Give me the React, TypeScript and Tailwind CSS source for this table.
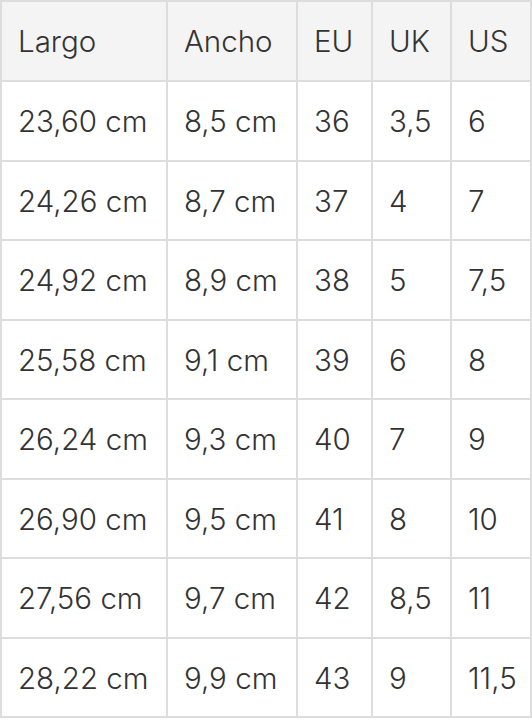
import React from "react";

const headers = ["Largo", "Ancho", "EU", "UK", "US"];

const rows: string[][] = [
  ["23,60 cm", "8,5 cm", "36", "3,5", "6"],
  ["24,26 cm", "8,7 cm", "37", "4", "7"],
  ["24,92 cm", "8,9 cm", "38", "5", "7,5"],
  ["25,58 cm", "9,1 cm", "39", "6", "8"],
  ["26,24 cm", "9,3 cm", "40", "7", "9"],
  ["26,90 cm", "9,5 cm", "41", "8", "10"],
  ["27,56 cm", "9,7 cm", "42", "8,5", "11"],
  ["28,22 cm", "9,9 cm", "43", "9", "11,5"],
];

const App = () => {
  return (
    <div
      className="w-[532px] bg-white text-[#333333] text-[29.5px] font-[350]"
      style={{ fontFamily: "Inter, 'Noto Sans', sans-serif" }}
    >
      <div className="grid grid-cols-[166px_130px_75px_79px_80px] border-l-2 border-t-2 border-[#dddddd]">
        {headers.map((h) => (
          <div
            key={h}
            className="h-[80px] flex items-center pl-4 pt-px bg-[#f4f4f4] border-r-2 border-b-2 border-[#dddddd]"
          >
            {h}
          </div>
        ))}
        {rows.map((row, i) =>
          row.map((cell, j) => (
            <div
              key={`${i}-${j}`}
              className="h-[79.5px] flex items-center pl-4 pt-px border-r-2 border-b-2 border-[#dddddd]"
            >
              {cell}
            </div>
          ))
        )}
      </div>
    </div>
  );
};

export default App;
